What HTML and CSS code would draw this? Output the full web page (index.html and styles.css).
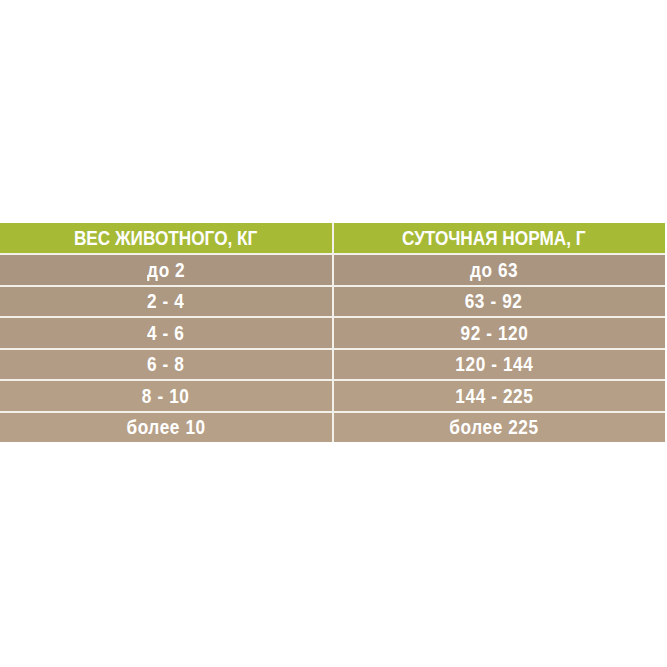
FILE: index.html
```html
<!DOCTYPE html>
<html lang="ru">
<head>
<meta charset="utf-8">
<link rel="stylesheet" href="styles.css">
</head>
<body>
<div class="page">
  <div class="table">
    <div class="cell head"><span>ВЕС ЖИВОТНОГО, КГ</span></div>
    <div class="cell head c2"><span>СУТОЧНАЯ НОРМА, Г</span></div>
    <div class="cell r1"><span>до 2</span></div>
    <div class="cell r1 c2"><span>до 63</span></div>
    <div class="cell r2"><span>2 - 4</span></div>
    <div class="cell r2 c2"><span>63 - 92</span></div>
    <div class="cell r3"><span>4 - 6</span></div>
    <div class="cell r3 c2"><span>92 - 120</span></div>
    <div class="cell r4"><span>6 - 8</span></div>
    <div class="cell r4 c2"><span>120 - 144</span></div>
    <div class="cell r5"><span>8 - 10</span></div>
    <div class="cell r5 c2"><span>144 - 225</span></div>
    <div class="cell r6"><span>более 10</span></div>
    <div class="cell r6 c2"><span>более 225</span></div>
  </div>
</div>
</body>
</html>
```

FILE: styles.css
```css
html, body {
  margin: 0;
  padding: 0;
  background: #ffffff;
}
.page {
  width: 667px;
  height: 667px;
  padding-top: 223px;
  box-sizing: border-box;
}
.table {
  width: 665px;
  display: grid;
  grid-template-columns: 332px 331px;
  grid-template-rows: 30px repeat(6, 29.5px);
  column-gap: 2px;
  row-gap: 2px;
  background: #f3efe9;
  padding-right: 2px;
  box-sizing: border-box;
}
.cell {
  display: flex;
  align-items: center;
  justify-content: center;
  color: #ffffff;
  font-family: "Liberation Sans", Arial, sans-serif;
  font-weight: bold;
  font-size: 20px;
  letter-spacing: 0.7px;
  background: #b09a84;
}
.c2 {
  padding-right: 11px;
}
.cell span {
  display: inline-block;
  transform: scaleX(0.86);
  white-space: nowrap;
  padding-top: 1px;
}
.head {
  background: #a6ba36;
  letter-spacing: 0;
}
.r1 { background: #aa9581; }
.r2 { background: #ad9882; }
.r3 { background: #b09a84; }
.r4 { background: #b39c85; }
.r5 { background: #b59f86; }
.r6 { background: #b7a088; }
```
